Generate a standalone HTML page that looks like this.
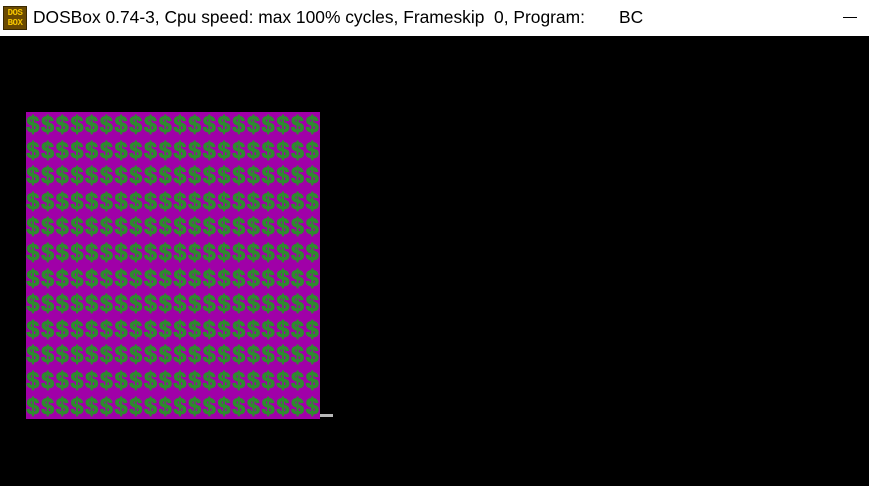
<!DOCTYPE html>
<html><head><meta charset="utf-8"><style>
html,body{margin:0;padding:0;width:869px;height:486px;overflow:hidden;background:#000}
.title{position:absolute;left:0;top:0;width:869px;height:36px;background:#fff}
.t{position:absolute;top:7px;font:17.4px "Liberation Sans",sans-serif;color:#000;white-space:pre}
.icon{position:absolute;left:3px;top:6px;width:24px;height:24px;background:#6b4a00;border:1px solid #3a2800;box-sizing:border-box;font:bold 9px/10px "Liberation Mono",monospace;color:#f4c400;text-align:center;padding-top:1px;letter-spacing:-0.5px}
.min{position:absolute;left:843px;top:17px;width:14px;height:1px;background:#000}
.grid{position:absolute;left:26px;top:112px;width:294px;height:307px;background:#a000a8;overflow:hidden}
.rows{margin:0;padding:0;font:bold 23px/25.6px "Liberation Mono",monospace;color:#2e8b2e;-webkit-text-stroke:0.9px #2e8b2e;letter-spacing:0.9px;white-space:pre;margin-left:0px;margin-top:2px}
.cur{position:absolute;left:320px;top:414px;width:13px;height:3px;background:#b8b8b8}
</style></head><body>
<div class="title">
<div class="icon">DOS<br>BOX</div>
<div class="t" style="left:33px">DOSBox 0.74-3, Cpu speed: max 100% cycles, Frameskip  0, Program:</div>
<div class="t" style="left:619px">BC</div>
<div class="min"></div>
</div>
<div class="grid"><div class="rows">$$$$$$$$$$$$$$$$$$$$
$$$$$$$$$$$$$$$$$$$$
$$$$$$$$$$$$$$$$$$$$
$$$$$$$$$$$$$$$$$$$$
$$$$$$$$$$$$$$$$$$$$
$$$$$$$$$$$$$$$$$$$$
$$$$$$$$$$$$$$$$$$$$
$$$$$$$$$$$$$$$$$$$$
$$$$$$$$$$$$$$$$$$$$
$$$$$$$$$$$$$$$$$$$$
$$$$$$$$$$$$$$$$$$$$
$$$$$$$$$$$$$$$$$$$$</div></div>
<div class="cur"></div>
</body></html>
